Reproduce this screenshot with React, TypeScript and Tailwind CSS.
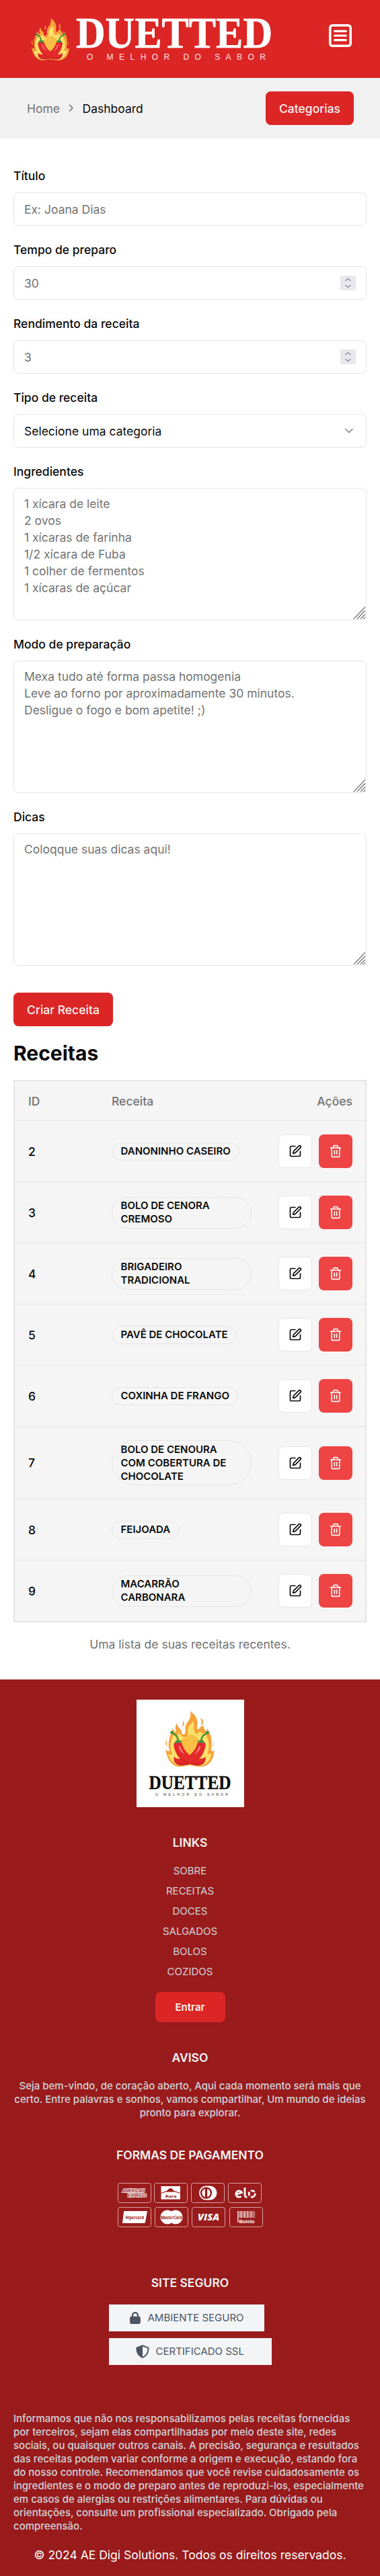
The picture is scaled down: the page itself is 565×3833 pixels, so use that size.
import type { ReactNode } from "react";
import { ChevronDown, ChevronRight, SquarePen, Trash2 } from "lucide-react";

const recipes = [
  { id: 2, name: "DANONINHO CASEIRO" },
  { id: 3, name: "BOLO DE CENORA CREMOSO" },
  { id: 4, name: "BRIGADEIRO TRADICIONAL" },
  { id: 5, name: "PAVÊ DE CHOCOLATE" },
  { id: 6, name: "COXINHA DE FRANGO" },
  { id: 7, name: "BOLO DE CENOURA COM COBERTURA DE CHOCOLATE" },
  { id: 8, name: "FEIJOADA" },
  { id: 9, name: "MACARRÃO CARBONARA" },
];

const links = ["SOBRE", "RECEITAS", "DOCES", "SALGADOS", "BOLOS", "COZIDOS"];

function Pepper() {
  return (
    <g>
      <path
        d="M238 252C245 243 268 242 275 252C280 275 300 303 330 316C352 324 370 323 381 311C384 330 372 347 350 349C310 352 262 330 246 290C240 275 236 262 238 252Z"
        fill="#e5292b"
      />
      <path d="M242 280C256 325 305 347 352 344C366 342 376 334 381 322C380 338 368 348 350 350C308 352 262 331 246 291Z" fill="#bf1f26" />
      <path d="M261 262C266 263 270 270 272 279C277 289 284 297 289 302C277 296 262 283 261 262Z" fill="#f58a80" />
      <path d="M240 254C244 246 244 239 253 237C260 236 272 239 277 247C274 247 271 244 268 245C269 249 268 252 266 253C262 250 260 248 256 249C250 250 246 250 240 254Z" fill="#3f8f43" />
      <path d="M257 242C258 226 248 211 232 207" fill="none" stroke="#4a9440" strokeWidth="8" />
      <circle cx="229" cy="203" r="7" fill="#3f8f43" />
    </g>
  );
}

function Flame({ className }: { className: string }) {
  return (
    <svg viewBox="197 107 228 250" preserveAspectRatio="none" className={className} aria-hidden="true">
      <g fill="#f7a13a">
        <path d="M256 356C232 352 210 332 200 278C206 286 212 289 219 285C210 262 214 222 236 182C236 196 242 203 249 199C243 185 243 172 254 163C254 178 264 186 272 194C270 208 282 218 288 207C294 198 287 183 292 172C298 156 318 142 313 108C333 122 348 143 344 166C342 180 343 192 352 188C352 180 362 175 374 170C368 180 376 190 386 198C390 192 388 188 387 182C407 210 414 240 405 282C410 289 416 288 421 284C418 324 400 352 366 356C340 358 325 350 309 350C292 350 276 358 256 356Z" />
        <path d="M206 234C199 244 198 256 208 267C205 256 205 245 206 234Z" />
        <path d="M279 149C289 160 286 172 274 177C280 168 280 158 279 149Z" />
        <path d="M358 138C374 148 374 160 361 174C364 160 363 149 358 138Z" />
        <path d="M416 244C420 253 419 262 412 268C415 260 416 252 416 244Z" />
      </g>
      <path
        d="M262 350C236 346 218 325 212 300C219 306 227 304 231 298C218 272 222 240 236 214C246 222 262 220 259 196C268 220 288 232 298 218C306 204 294 188 308 172C316 164 324 160 322 148C336 170 322 190 334 204C346 214 354 204 352 194C358 204 370 212 378 204C398 236 402 268 390 296C397 302 403 301 409 296C403 326 388 346 362 350C340 352 325 346 309 346C292 346 280 352 262 350Z"
        fill="#fde06a"
      />
      <path d="M282 338C246 300 256 240 292 222C302 212 312 216 320 210C326 220 340 220 346 230C370 262 366 306 336 338Z" fill="#f9bf45" />
      <g transform="translate(619 0) scale(-1 1)">
        <Pepper />
      </g>
      <Pepper />
    </svg>
  );
}

type WordmarkProps = {
  className: string;
  color: string;
  taglineColor: string;
  taglineX: number;
  taglineY: number;
  taglineWidth: number;
};

function Wordmark({ className, color, taglineColor, taglineX, taglineY, taglineWidth }: WordmarkProps) {
  return (
    <svg viewBox="-6 -20 304 96" preserveAspectRatio="none" className={className}>
      <text
        x="0"
        y="44"
        fontFamily="'Liberation Serif', serif"
        fontWeight="700"
        fontSize="66"
        fill={color}
        stroke={color}
        strokeWidth="0.7"
        textLength="292"
        lengthAdjust="spacingAndGlyphs"
      >
        DUETTED
      </text>
      <text
        x={taglineX}
        y={taglineY}
        fontFamily="'Liberation Sans', sans-serif"
        fontSize="12"
        fill={taglineColor}
        textLength={taglineWidth}
        lengthAdjust="spacing"
      >
        O MELHOR DO SABOR
      </text>
    </svg>
  );
}

function Field({ label, children }: { label: string; children: ReactNode }) {
  return (
    <div className="flex flex-col">
      <label className="mb-2 flex h-6 items-center text-sm font-medium">{label}</label>
      {children}
    </div>
  );
}

function NumberBox({ placeholder }: { placeholder: string }) {
  return (
    <div className="flex h-10 items-center justify-between rounded-md border border-[#e5e5e5] px-[15px]">
      <input className="w-40 text-sm outline-none placeholder:text-[#737373]" placeholder={placeholder} />
      <span className="flex h-[22px] w-[23px] flex-col items-center justify-center bg-[#e8e8ee]">
        <svg viewBox="0 0 23 22" className="h-[22px] w-[23px]" fill="none" stroke="#9292a0" strokeWidth="1.6">
          <path d="M7.5 8L11.5 4.5L15.5 8M7.5 14L11.5 17.5L15.5 14" />
        </svg>
      </span>
    </div>
  );
}

function AreaBox({ placeholder }: { placeholder: string }) {
  return (
    <div className="relative flex h-[197px]">
      <textarea
        className="h-full w-full resize-none rounded-md border border-[#e5e5e5] px-[15px] py-2 text-sm outline-none placeholder:text-[#737373]"
        placeholder={placeholder}
      />
      <svg viewBox="0 0 19 19" className="absolute right-px bottom-px h-[19px] w-[19px]" stroke="#6b6b6b" strokeWidth="1.1">
        <path d="M1 18L18 0M6 18L18 5.5M11 18L18 11M15.5 18L18 15.5" />
      </svg>
    </div>
  );
}

function Card({ children, className = "" }: { children: ReactNode; className?: string }) {
  return (
    <svg viewBox="0 0 50 30" className={`h-[30px] w-[50px] shrink-0 ${className}`} fill="#fff">
      <rect x="0.5" y="0.5" width="49" height="29" rx="3" fill="none" stroke="#d9a0a0" />
      {children}
    </svg>
  );
}

function Payments() {
  return (
    <div className="flex w-[216px] flex-col gap-[6px]">
      <div className="flex gap-[4.7px]">
        <Card>
          <g fontFamily="'Liberation Sans', sans-serif" fontWeight="700" fontSize="6.4" fill="#991b1b" stroke="#fff" strokeWidth="1.5" paintOrder="stroke">
            <text x="7" y="14" fontStyle="italic" textLength="33" lengthAdjust="spacingAndGlyphs">AMERICAN</text>
            <text x="15" y="21" textLength="28" lengthAdjust="spacingAndGlyphs">EXPRESS</text>
          </g>
        </Card>
        <Card>
          <path d="M10.5 5H39V15L32 12.5C28 12 28 8 24.5 8C21 8 21 12 17 12.5L10.5 15Z" />
          <path d="M10.5 16L18 13.5H31L39 16V24.5H10.5Z" />
          <text x="16.5" y="22" fill="#991b1b" fontFamily="'DejaVu Sans', sans-serif" fontWeight="700" fontSize="6" textLength="17" lengthAdjust="spacingAndGlyphs">Aura</text>
        </Card>
        <Card>
          <path d="M22.5 4.5H28A10.5 10.5 0 0 1 28 25.5H22.5A10.5 10.5 0 0 1 22.5 4.5Z" />
          <circle cx="22.5" cy="15" r="8.7" fill="#991b1b" />
          <path d="M20.8 8.9A6.4 6.4 0 0 0 20.8 21.1ZM24.2 8.9A6.4 6.4 0 0 1 24.2 21.1Z" />
        </Card>
        <Card>
          <g fill="none" stroke="#fff" strokeWidth="2.8">
            <path d="M11.5 17.5L20.5 14.5A4.6 4.6 0 1 0 19.5 20" />
            <path d="M25 7V18C25 20.5 26.5 21.5 28.5 21" />
            <path d="M32 19A5 5 0 0 1 31.8 13.5M34 12A5 5 0 0 1 39.5 13.5M40.3 15.5A5 5 0 0 1 34 21" />
          </g>
        </Card>
      </div>
      <div className="flex gap-[5px]">
        <Card>
          <path d="M10 6H44L41 22.5Q40.7 24 39 24H7L9 7.5Q9.2 6 10 6Z" />
          <text x="11.5" y="17.5" fill="#991b1b" fontFamily="'Open Sans', sans-serif" fontWeight="700" fontSize="7.5" textLength="27.5" lengthAdjust="spacingAndGlyphs">Hipercard</text>
        </Card>
        <Card>
          <circle cx="19" cy="15" r="10.5" />
          <circle cx="31" cy="15" r="10.5" />
          <text x="9" y="18" fill="#991b1b" stroke="#fff" strokeWidth="1" paintOrder="stroke" fontFamily="'Liberation Sans', sans-serif" fontWeight="700" fontSize="7.5" textLength="32" lengthAdjust="spacingAndGlyphs">MasterCard</text>
        </Card>
        <Card>
          <text x="9" y="20" fontFamily="'Open Sans', sans-serif" fontWeight="800" fontStyle="italic" fontSize="14.5" textLength="32" lengthAdjust="spacingAndGlyphs">VISA</text>
        </Card>
        <Card className="ml-px">
          <path d="M12 6h1.5v17H12zM14.5 6h1v10h-1zM16.5 6h2v10h-2zM19.5 6h.8v10h-.8zM21.5 6h2v10h-2zM24.5 6h.8v10h-.8zM26.5 6h1.8v10h-1.8zM29.5 6h.8v10h-.8zM31.5 6h1.8v10h-1.8zM34.5 6h.8v10h-.8zM36.5 6h1v10h-1z" opacity="0.85" />
          <text x="14.5" y="23.5" stroke="#991b1b" strokeWidth="0.8" paintOrder="stroke" fontFamily="'Liberation Sans', sans-serif" fontWeight="700" fontSize="7.5" textLength="23" lengthAdjust="spacingAndGlyphs">Boleto</text>
        </Card>
      </div>
    </div>
  );
}

function FooterTitle({ children }: { children: ReactNode }) {
  return <h2 className="text-center text-sm font-semibold text-[#f3f4f6]">{children}</h2>;
}

export default function App() {
  return (
    <div className="w-[565px] overflow-hidden bg-white text-base text-[#0a0a0a] [font-family:Inter,sans-serif]">
      <style>{"html{font-size:20px}"}</style>

      <header className="flex h-[116px] items-start justify-between bg-[#dc2626]">
        <div className="flex items-start pt-[7px] pl-[46px]">
          <Flame className="mt-[20px] h-[63px] w-[58px]" />
          <Wordmark className="ml-[3px] h-[96px] w-[304px]" color="#ffffff" taglineColor="#fde3e3" taglineX={16} taglineY={61.5} taglineWidth={266} />
        </div>
        <svg viewBox="0 0 34 34" className="mt-[36px] mr-[42px] h-[34px] w-[34px]" fill="none" stroke="#fff" strokeLinecap="round">
          <rect x="1.8" y="1.8" width="30.4" height="30.4" rx="3.5" strokeWidth="3.6" />
          <path d="M8.6 10.3H25.4M8.6 17H25.4M8.6 23.6H25.4" strokeWidth="3.2" />
        </svg>
      </header>

      <nav className="flex h-[90px] items-center justify-between bg-[#f1f1f1] pr-[39px] pl-[40px]">
        <ol className="flex items-center gap-[8px] text-sm">
          <li className="text-[#737373]">Home</li>
          <li>
            <ChevronRight className="h-[17.5px] w-[17.5px] text-[#737373]" />
          </li>
          <li>Dashboard</li>
        </ol>
        <button className="h-10 w-[131px] rounded-md bg-[#dc2626] text-sm font-medium text-[#fef2f2]">Categorias</button>
      </nav>

      <main className="px-4 pt-8 pb-8">
        <form className="flex flex-col gap-4">
          <Field label="Título">
            <input className="h-10 rounded-md border border-[#e5e5e5] px-[15px] text-sm outline-none placeholder:text-[#737373]" placeholder="Ex: Joana Dias" />
          </Field>
          <Field label="Tempo de preparo">
            <NumberBox placeholder="30" />
          </Field>
          <Field label="Rendimento da receita">
            <NumberBox placeholder="3" />
          </Field>
          <Field label="Tipo de receita">
            <div className="flex h-10 items-center justify-between rounded-md border border-[#e5e5e5] px-[15px] text-sm">
              <span>Selecione uma categoria</span>
              <ChevronDown className="h-4 w-4 opacity-50" />
            </div>
          </Field>
          <Field label="Ingredientes">
            <AreaBox placeholder={"1 xícara de leite\n2 ovos\n1 xícaras de farinha\n1/2 xícara de Fuba\n1 colher de fermentos\n1 xícaras de açúcar"} />
          </Field>
          <Field label="Modo de preparação">
            <AreaBox placeholder={"Mexa tudo até forma passa homogenia\nLeve ao forno por aproximadamente 30 minutos.\nDesligue o fogo e bom apetite! ;)"} />
          </Field>
          <Field label="Dicas">
            <AreaBox placeholder="Coloqque suas dicas aqui!" />
          </Field>
          <button type="button" className="mt-4 h-10 w-[148px] self-start rounded-md bg-[#dc2626] text-sm font-medium text-[#fef2f2]">
            Criar Receita
          </button>
        </form>

        <h1 className="mt-4 text-2xl leading-8 font-bold">Receitas</h1>

        <div className="mt-4 border-2 border-[#e5e5e5] bg-[#f5f5f5]">
          <div className="grid h-[59px] grid-cols-[124px_248px_149px] items-center border-b border-[#e5e5e5] text-sm font-medium text-[#737373]">
            <span className="pl-4">ID</span>
            <span className="pl-4">Receita</span>
            <span className="pr-[19px] text-right">Ações</span>
          </div>
          {recipes.map((r) => (
            <div key={r.id} className="grid grid-cols-[124px_248px_149px] items-center border-b border-[#e5e5e5] py-4 last:border-b-0">
              <span className="pl-4 text-sm font-medium">{r.id}</span>
              <span className="flex px-4">
                <span className="rounded-[34px] border border-[#e5e5e5] px-2.5 py-0.5 text-xs leading-4 font-semibold">{r.name}</span>
              </span>
              <span className="flex justify-end gap-2 pr-[19px]">
                <button className="flex h-10 w-[50px] shrink-0 items-center justify-center rounded-md border border-[#e5e5e5] bg-white">
                  <SquarePen className="h-4 w-4" />
                </button>
                <button className="flex h-10 w-[50px] shrink-0 items-center justify-center rounded-md bg-[#ef4444] text-[#fafafa]">
                  <Trash2 className="h-4 w-4" />
                </button>
              </span>
            </div>
          ))}
        </div>
        <p className="mt-4 text-center text-sm text-[#737373]">Uma lista de suas receitas recentes.</p>
      </main>

      <footer className="flex h-[1334px] flex-col items-center bg-[#991b1b] px-4 pt-[30px] text-xs text-[#d1d5db]">
        <div className="flex h-[160px] w-[160px] flex-col items-center bg-white pt-[17px]">
          <Flame className="h-[83px] w-[75px]" />
          <Wordmark className="mt-[5px] h-[42px] w-[127px]" color="#0a0a0a" taglineColor="#333333" taglineX={23} taglineY={66} taglineWidth={258} />
        </div>

        <div className="mt-[40px]">
          <FooterTitle>LINKS</FooterTitle>
        </div>
        <ul className="mt-[15px] flex flex-col items-center">
          {links.map((l) => (
            <li key={l} className="h-[30px] leading-[30px]">
              {l}
            </li>
          ))}
        </ul>
        <button className="mt-[15px] h-[45px] w-[104px] rounded-md bg-[#dc2626] text-xs font-semibold text-[#fef2f2]">Entrar</button>

        <div className="mt-[40px]">
          <FooterTitle>AVISO</FooterTitle>
        </div>
        <p className="mt-[20px] text-center text-xs leading-4 font-medium">
          Seja bem-vindo, de coração aberto, Aqui cada momento será mais que certo. Entre palavras e sonhos, vamos compartilhar, Um mundo de ideias pronto para explorar.
        </p>
        <div className="mt-[40px]">
          <FooterTitle>FORMAS DE PAGAMENTO</FooterTitle>
        </div>
        <div className="mt-[29px]">
          <Payments />
        </div>
        <div className="mt-[70px]">
          <FooterTitle>SITE SEGURO</FooterTitle>
        </div>
        <div className="mt-[20px] flex w-[242px] flex-col gap-[10px] text-xs text-[#4b5563]">
          <div className="flex h-8 w-[231px] items-center bg-[#f3f4f6] pl-[31px]">
            <svg viewBox="0 0 448 512" className="h-[18px] w-[16px]" fill="currentColor">
              <path d="M144 144v48H304V144c0-44.2-35.8-80-80-80s-80 35.8-80 80zM80 192V144C80 64.5 144.5 0 224 0s144 64.5 144 144v48h16c35.3 0 64 28.7 64 64V448c0 35.3-28.7 64-64 64H64c-35.3 0-64-28.7-64-64V256c0-35.3 28.7-64 64-64H80z" />
            </svg>
            <span className="ml-[11px]">AMBIENTE SEGURO</span>
          </div>
          <div className="flex h-8 w-[242px] items-center bg-[#f3f4f6] pl-[40px]">
            <svg viewBox="0 0 20 20" className="h-[20px] w-[20px]">
              <path d="M10 1.2L18.6 4.6C18.8 10 16.5 16 10 18.8C3.5 16 1.2 10 1.4 4.6Z" fill="none" stroke="currentColor" strokeWidth="2" strokeLinejoin="round" />
              <path d="M10 1V19C3.5 16 1 10 1.4 4.6Z" fill="currentColor" />
            </svg>
            <span className="ml-[10px]">CERTIFICADO SSL</span>
          </div>
        </div>
        <p className="mt-[70px] w-full text-xs leading-4 font-medium">
          Informamos que não nos responsabilizamos pelas receitas fornecidas por terceiros, sejam elas compartilhadas por meio deste site, redes sociais, ou quaisquer outros canais. A precisão, segurança e resultados das receitas podem variar conforme a origem e execução, estando fora do nosso controle. Recomendamos que você revise cuidadosamente os ingredientes e o modo de preparo antes de reproduzi-los, especialmente em casos de alergias ou restrições alimentares. Para dúvidas ou orientações, consulte um profissional especializado. Obrigado pela compreensão.
        </p>
        <p className="mt-[20px] text-center text-sm text-white">© 2024 AE Digi Solutions. Todos os direitos reservados.</p>
      </footer>
    </div>
  );
}
